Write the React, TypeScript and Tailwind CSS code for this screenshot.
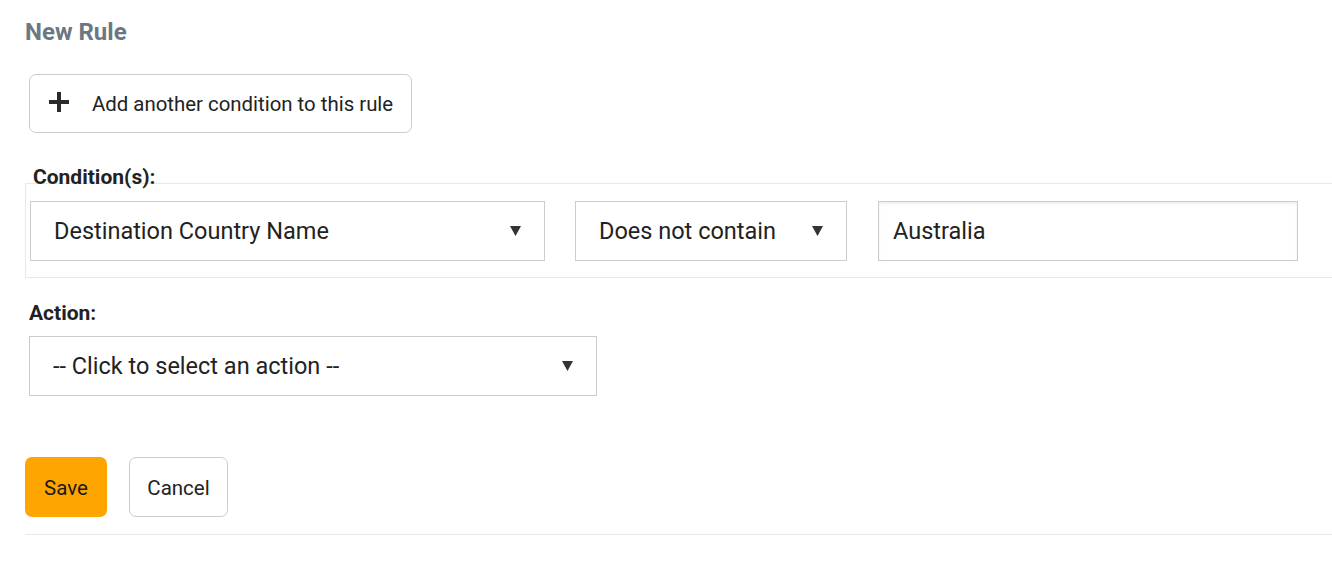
const font = { fontFamily: "Roboto, 'Liberation Sans', sans-serif" };

function Caret() {
  return (
    <svg width="11" height="10" viewBox="0 0 11 10" className="shrink-0">
      <path d="M0 0 H11 L5.5 10 Z" fill="#333" />
    </svg>
  );
}

function Select({ label, width }: { label: string; width: string }) {
  return (
    <div
      className={`${width} h-[60px] border border-[#cccccc] bg-white flex items-center justify-between pl-[23px] pr-[23px] text-[23.5px] text-[#222]`}
    >
      <span className="pt-[2px]">{label}</span>
      <Caret />
    </div>
  );
}

export default function App() {
  return (
    <div className="bg-white min-h-[585px] w-[1332px] overflow-hidden" style={font}>
      <div className="pl-[25px] pt-[16px]">
        <h1 className="text-[24px] font-bold text-[#6b7882] leading-[32px]">New Rule</h1>

        <button className="mt-[26px] ml-[4px] w-[383px] h-[59px] border border-[#cccccc] rounded-[7px] bg-white flex items-center text-[20.4px] text-[#222]">
          <svg width="20" height="20" viewBox="0 0 20 20" className="ml-[19px] mr-[23px] -mt-[4px]">
            <path d="M8 0 H12 V8 H20 V12 H12 V20 H8 V12 H0 V8 H8 Z" fill="#2b2b2b" />
          </svg>
          <span className="pt-[2px]">Add another condition to this rule</span>
        </button>

        <div className="mt-[33px] pl-[8px] text-[21px] font-bold text-[#222] leading-[22px]">Condition(s):</div>
        <div className="mt-[-5px] border-t border-l border-b border-[#e9e9e9] pl-[4px] pt-[17px] pb-[16px] flex items-center">
          <Select label="Destination Country Name" width="w-[515px]" />
          <div className="ml-[30px]">
            <Select label="Does not contain" width="w-[272px]" />
          </div>
          <div className="ml-[31px] w-[420px] h-[60px] border border-[#cccccc] shadow-[inset_0_2px_3px_rgba(0,0,0,0.07)] flex items-center pl-[14px] pt-[2px] text-[23.5px] text-[#222]">
            Australia
          </div>
        </div>

        <div className="mt-[22px] pl-[4px] text-[21px] font-bold text-[#222] leading-[26px]">Action:</div>
        <div className="mt-[10px] ml-[4px]">
          <Select label="-- Click to select an action --" width="w-[568px]" />
        </div>

        <div className="mt-[61px] flex items-center gap-[22px]">
          <button className="w-[82px] h-[60px] rounded-[7px] bg-[#ffa500] pt-[2px] text-[20.5px] text-[#1a1a1a]">Save</button>
          <button className="w-[99px] h-[60px] rounded-[7px] border border-[#cccccc] bg-white pt-[2px] text-[20.5px] text-[#222]">
            Cancel
          </button>
        </div>

        <div className="mt-[17px] border-t border-[#e9e9e9]" />
      </div>
    </div>
  );
}
